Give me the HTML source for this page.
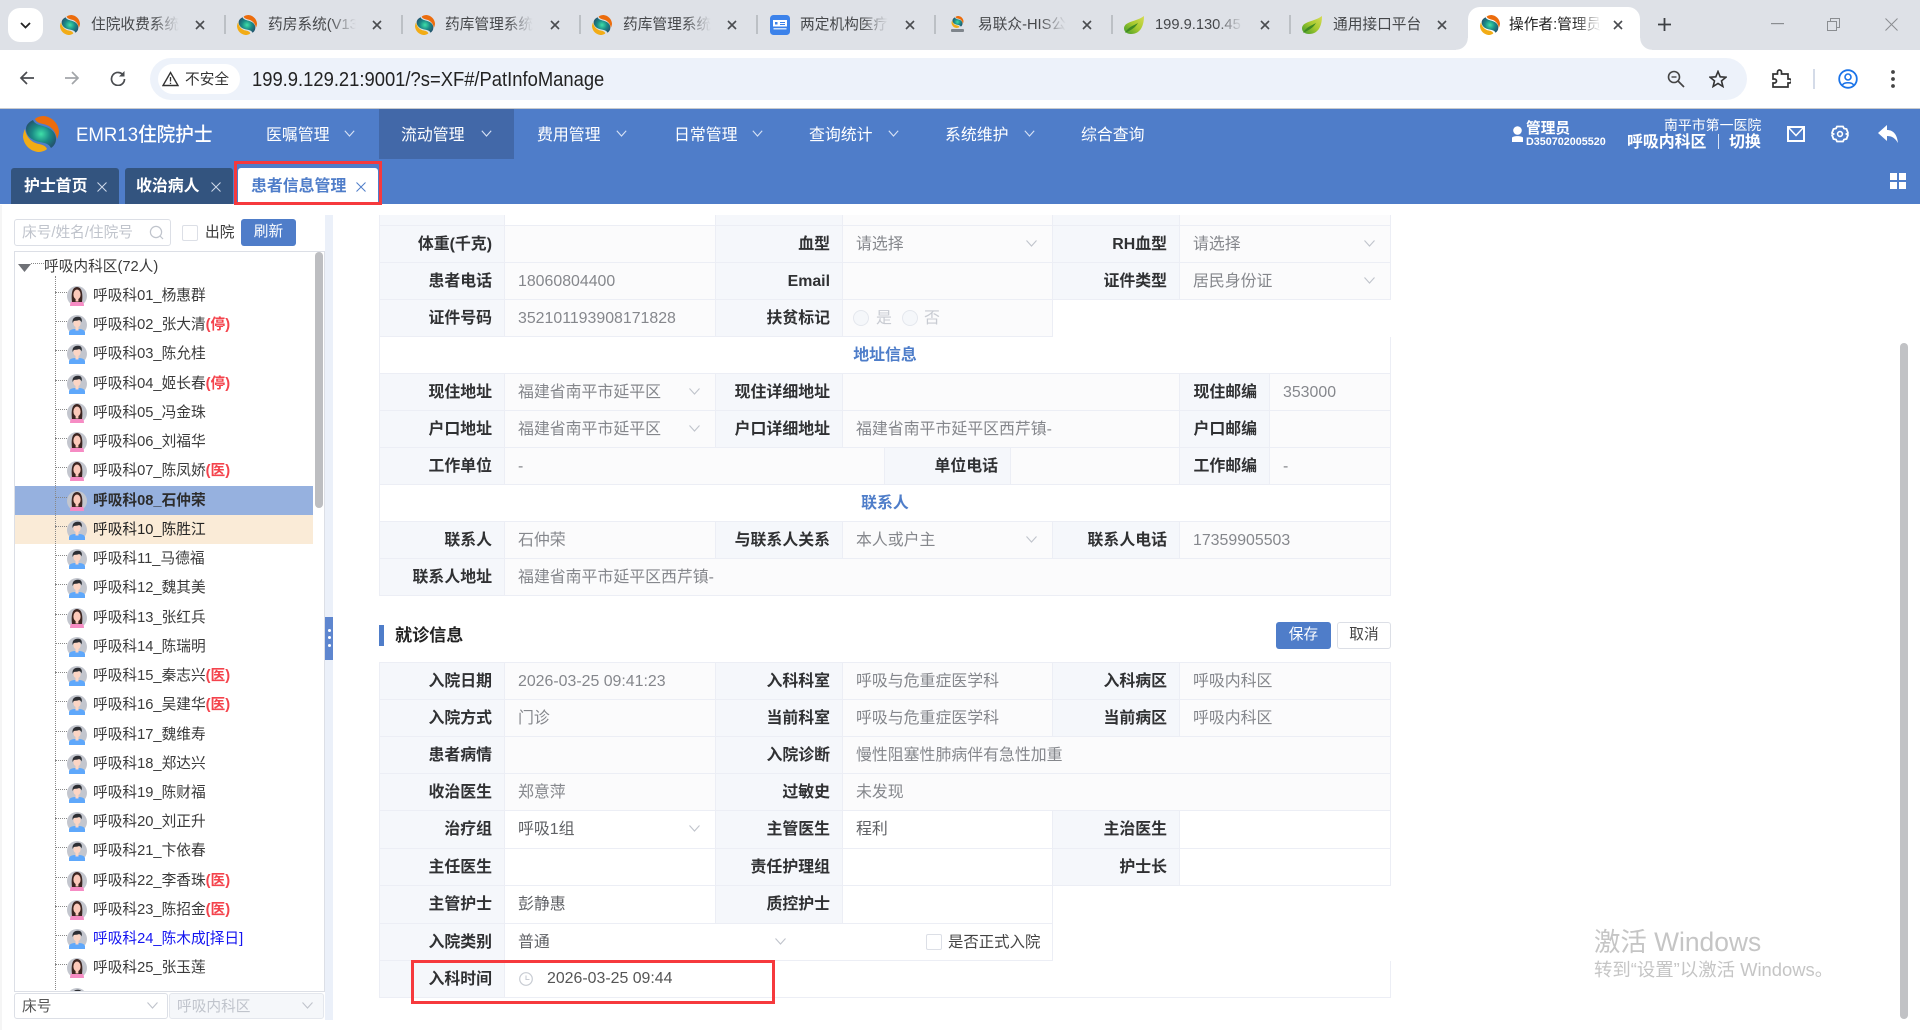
<!DOCTYPE html>
<html lang="zh-CN">
<head>
<meta charset="utf-8">
<title>操作者:管理员</title>
<style>
html,body{margin:0;padding:0;width:1920px;height:1030px;overflow:hidden;background:#fff}
body{position:relative;font-family:"Liberation Sans","Noto Sans CJK SC",sans-serif;color:#333}
div,span{box-sizing:border-box}
.a{position:absolute;white-space:nowrap}
svg{display:block}
/* chrome */
#strip{position:absolute;left:0;top:0;width:1920px;height:50px;background:#dee1e7}
#toolbar{position:absolute;left:0;top:50px;width:1920px;height:59px;background:#fff;border-bottom:1px solid #c8cacd;border-radius:8px 8px 0 0}
.tt{position:absolute;top:13px;height:24px;line-height:24px;font-size:14.7px;color:#45474a;width:88px;overflow:hidden;white-space:nowrap;-webkit-mask-image:linear-gradient(90deg,#000 70%,transparent 100%);mask-image:linear-gradient(90deg,#000 70%,transparent 100%)}
.ti{position:absolute;top:15px;width:20px;height:20px}
.tx{position:absolute;top:20px;width:10px;height:10px}
.sep{position:absolute;top:15px;width:2px;height:19px;background:#bcc0c5}
/* header */
#hdr{position:absolute;left:0;top:109px;width:1920px;height:95px;background:#4f7dc9}
.m{position:absolute;top:15px;line-height:24px;font-size:15.9px;color:#fff;white-space:nowrap}
.mc{position:absolute;top:21px;width:11px;height:7px}
.st{position:absolute;top:59px;height:36px;background:#33547f;border-radius:3px 3px 0 0}
.stt{position:absolute;top:0;line-height:38px;font-size:15.9px;font-weight:700;color:#fff;white-space:nowrap}
/* sidebar */
#tree{position:absolute;left:14px;top:251px;width:311px;height:741px;border:1px solid #dcdfe6;overflow:hidden;background:#fff}
#rows{position:absolute;left:0;top:29px;width:298px}
.r{position:relative;height:29.24px;font-size:14.7px;line-height:31px;color:#3a3a3a;white-space:nowrap}
.r:before{content:"";position:absolute;left:40px;top:11px;width:12px;border-top:1px dotted #888}
.r svg{position:absolute;left:52px;top:5px;width:20px;height:20px}
.r span{position:absolute;left:78px;top:0}
.r b{color:#f4434c;font-weight:700}
.sel{background:#96b1df}.sel span{font-weight:700;color:#2c2c2c}
.cur{background:#faebd7}.cur span{color:#222}
/* form */
.row{position:absolute;left:379px;width:1012px}
.c{position:absolute;top:0;height:100%;border-right:1px solid #eceef5;border-bottom:1px solid #eceef5;font-size:15.9px;line-height:38px;white-space:nowrap}
.l{background:#f5f7fb;text-align:right;padding-right:12px;font-weight:700;color:#303133}
.v{background:#fbfbfc;padding-left:13px;color:#85878c}
.w{background:#fff;color:#606266}
.l1{left:0;width:126px;border-left:1px solid #eceef5}
.v1{left:126px;width:211px}
.l2{left:337px;width:127px}
.v2{left:464px;width:210px}
.l3{left:674px;width:127px}
.v3{left:801px;width:211px}
.ch{position:absolute;right:15px;top:14px;width:11px;height:7px}
.sec{left:0;width:1012px;background:#fff;border-left:1px solid #eceef5;text-align:center;font-weight:700;color:#4e7dc9;font-size:15.9px}
.rad{position:absolute;top:10px;width:16px;height:16px;border:1px solid #e4e7ed;border-radius:50%;background:#f5f7fa}
</style>
</head>
<body>
<svg width="0" height="0" style="position:absolute">
<defs>
<radialGradient id="lg" cx="50%" cy="50%" r="55%"><stop offset="0" stop-color="#3fe0a8"/><stop offset=".55" stop-color="#1b8a86"/><stop offset="1" stop-color="#23566f"/></radialGradient>
<linearGradient id="lf" x1="0" y1="1" x2="1" y2="0"><stop offset="0" stop-color="#3f9a2a"/><stop offset=".5" stop-color="#a6c92e"/><stop offset="1" stop-color="#d8dc55"/></linearGradient>
<symbol id="logo" viewBox="0 0 36 36">
<path d="M21 0C29 1 35 7 36 15C36 18 35 21 34 23C33 15 27 9 20 8C16 7 13 6 12 3C14 1 18 0 21 0Z" fill="#ec6c0c"/>
<path d="M15 36C7 35 1 29 0 21C0 18 1 15 2 13C3 21 9 27 16 28C20 29 23 30 24 33C22 35 18 36 15 36Z" fill="#f2ac16"/>
<path d="M10 4C12 9 18 9 23 11C29 13 33 17 33 23C33 27 31 30 28 32C25 26 18 27 13 25C7 23 3 19 3 13C3 9 6 6 10 4Z" fill="url(#lg)"/>
</symbol>
<symbol id="leaf" viewBox="0 0 20 20"><path d="M20 1C20 10 17 19 7 19C3 19 0 17 0 13C1 6 12 7 20 1Z" fill="url(#lf)"/><path d="M1 18C4 12 9 11 14 8C11 13 7 15 1 18Z" fill="#3f8a22"/></symbol>
<symbol id="x" viewBox="0 0 10 10"><path d="M1 1L9 9M9 1L1 9" stroke="#4a4c50" stroke-width="1.6" fill="none"/></symbol>
<symbol id="d" viewBox="0 0 11 7"><path d="M.5.5L5.5 6L10.5.5" stroke="#c0c4cc" stroke-width="1.1" fill="none"/></symbol>
<symbol id="dw" viewBox="0 0 11 7"><path d="M.8.8L5.5 6L10.2.8" stroke="#d7e2f5" stroke-width="1.1" fill="none"/></symbol>
<symbol id="f" viewBox="0 0 20 20">
<circle cx="10" cy="10" r="10" fill="#c3c6ce"/>
<path d="M3 20C3 15 6 14 10 14C14 14 17 15 17 20Z" fill="#f68cc4"/>
<path d="M5 16C4 8 5 1 10 1C15 1 16 8 15 16L12 16H8Z" fill="#3d2622"/>
<ellipse cx="10" cy="8.5" rx="3.6" ry="5" fill="#fcc9ba"/><rect x="8.6" y="12" width="2.8" height="3.5" fill="#fcc9ba"/></symbol>
<symbol id="m" viewBox="0 0 20 20">
<circle cx="10" cy="10" r="10" fill="#c3c6ce"/>
<path d="M2 20V17C3 14 7 14 10 14C13 14 17 14 18 17V20Z" fill="#5fa8fb"/>
<rect x="8.5" y="11" width="3" height="4.5" fill="#fcd5c4"/>
<ellipse cx="10" cy="8.2" rx="3.6" ry="4.2" fill="#fcd5c4"/>
<path d="M5.6 8C4.8 3.5 8 1.500 11 1.800C14 1.500 15.500 4 14.600 7.500C14 5.800 13 5 11.500 5.200C9.500 6 7 5.500 6.600 6.200Z" fill="#2d2f34"/></symbol>
</defs>
</svg>

<!-- Browser tab strip -->
<div id="strip">
<div class="a" style="left:8px;top:8px;width:35px;height:34px;background:#fff;border-radius:12px"></div>
<svg class="a" style="left:20px;top:22px" width="11" height="7"><path d="M1 1L5.500 5.500L10 1" stroke="#222" stroke-width="1.8" fill="none"/></svg>
<svg class="ti" style="left:60px"><use href="#logo"/></svg><div class="tt" style="left:91px">住院收费系统</div><svg class="tx" style="left:195px"><use href="#x"/></svg>
<div class="sep" style="left:224px"></div>
<svg class="ti" style="left:237px"><use href="#logo"/></svg><div class="tt" style="left:268px">药房系统(V13</div><svg class="tx" style="left:372px"><use href="#x"/></svg>
<div class="sep" style="left:401px"></div>
<svg class="ti" style="left:415px"><use href="#logo"/></svg><div class="tt" style="left:445px">药库管理系统</div><svg class="tx" style="left:550px"><use href="#x"/></svg>
<div class="sep" style="left:579px"></div>
<svg class="ti" style="left:592px"><use href="#logo"/></svg><div class="tt" style="left:623px">药库管理系统</div><svg class="tx" style="left:727px"><use href="#x"/></svg>
<div class="sep" style="left:756px"></div>
<svg class="ti" style="left:770px" viewBox="0 0 20 20"><rect width="20" height="20" rx="3.500" fill="#3c82ea"/><rect x="3" y="5" width="14" height="6.500" fill="#fff"/><rect x="5" y="7" width="2.500" height="2.500" fill="#3c82ea"/><rect x="10" y="7" width="5" height="1" fill="#3c82ea"/><rect x="10" y="9" width="5" height="1" fill="#3c82ea"/><rect x="3.500" y="13" width="13" height="1.500" fill="#cfe2fb"/></svg><div class="tt" style="left:800px">两定机构医疗</div><svg class="tx" style="left:905px"><use href="#x"/></svg>
<div class="sep" style="left:934px"></div>
<svg class="ti" style="left:951px;top:16px;width:13px;height:17px" viewBox="0 0 13 17"><use href="#logo" width="13" height="12"/><rect x="0" y="13" width="13" height="3" rx="1" fill="#7f858c"/></svg><div class="tt" style="left:978px">易联众-HIS公</div><svg class="tx" style="left:1082px"><use href="#x"/></svg>
<div class="sep" style="left:1111px"></div>
<svg class="ti" style="left:1124px"><use href="#leaf"/></svg><div class="tt" style="left:1155px">199.9.130.45</div><svg class="tx" style="left:1260px"><use href="#x"/></svg>
<div class="sep" style="left:1289px"></div>
<svg class="ti" style="left:1302px"><use href="#leaf"/></svg><div class="tt" style="left:1333px;-webkit-mask-image:none;mask-image:none">通用接口平台</div><svg class="tx" style="left:1437px"><use href="#x"/></svg>
<!-- active tab -->
<div class="a" style="left:1468px;top:7px;width:172px;height:43px;background:#fff;border-radius:12px 12px 0 0"></div>
<div class="a" style="left:1456px;top:38px;width:12px;height:12px;background:radial-gradient(circle at 0 0,#dee1e7 11.5px,#fff 12px)"></div>
<div class="a" style="left:1640px;top:38px;width:12px;height:12px;background:radial-gradient(circle at 100% 0,#dee1e7 11.5px,#fff 12px)"></div>
<svg class="ti" style="left:1480px"><use href="#logo"/></svg><div class="tt" style="left:1509px;color:#222;width:92px">操作者:管理员</div><svg class="tx" style="left:1613px"><use href="#x"/></svg>
<svg class="a" style="left:1657px;top:17px" width="15" height="15"><path d="M7.500 1V14M1 7.500H14" stroke="#3c3f43" stroke-width="1.8"/></svg>
<svg class="a" style="left:1771px;top:23px" width="13" height="2"><rect width="13" height="1.2" fill="#8a8d91"/></svg>
<svg class="a" style="left:1827px;top:18px" width="13" height="13"><path d="M.5 3.500H9.500V12.500H.5ZM3.500 3.500V.5H12.500V9.500H9.500" stroke="#8a8d91" fill="none"/></svg>
<svg class="a" style="left:1885px;top:18px" width="13" height="13"><path d="M.5.5L12.500 12.500M12.500.5L.5 12.500" stroke="#8a8d91" fill="none"/></svg>
</div>

<!-- Toolbar -->
<div id="toolbar"></div>
<svg class="a" style="left:19px;top:70px" width="16" height="16"><path d="M15 8H2M8 2L2 8L8 14" stroke="#4a4c50" stroke-width="1.7" fill="none"/></svg>
<svg class="a" style="left:64px;top:70px" width="16" height="16"><path d="M1 8H14M8 2L14 8L8 14" stroke="#a2a5a9" stroke-width="1.7" fill="none"/></svg>
<svg class="a" style="left:110px;top:70px" width="16" height="16"><path d="M13.500 5.500A6.500 6.500 0 1 0 14.500 9" stroke="#4a4c50" stroke-width="1.7" fill="none"/><path d="M14.500 1V6.500H9" fill="#4a4c50"/></svg>
<div class="a" style="left:150px;top:58px;width:1597px;height:42px;background:#edf2fa;border-radius:21px"></div>
<div class="a" style="left:158px;top:64px;width:82px;height:30px;background:#fff;border-radius:15px"></div>
<svg class="a" style="left:162px;top:71px" width="17" height="16"><path d="M8.500 1.500L16 14.500H1Z" stroke="#333" stroke-width="1.4" fill="none"/><path d="M8.500 6V10.500M8.500 11.700V13" stroke="#333" stroke-width="1.3"/></svg>
<div class="a" style="left:185px;top:68px;line-height:24px;font-size:14.7px;color:#333">不安全</div>
<div class="a" style="left:252px;top:66px;line-height:28px;font-size:20.4px;color:#222;transform-origin:0 50%;transform:scaleX(.902)">199.9.129.21:9001/?s=XF#/PatInfoManage</div>
<svg class="a" style="left:1667px;top:70px" width="18" height="18"><circle cx="7" cy="7" r="5.500" stroke="#444" stroke-width="1.6" fill="none"/><path d="M11 11L17 17" stroke="#444" stroke-width="1.7"/><path d="M4.500 7H9.500" stroke="#444" stroke-width="1.4"/></svg>
<svg class="a" style="left:1709px;top:70px" width="18" height="18"><path d="M9 1.500L11.200 6.800L16.900 7.200L12.500 10.900L13.900 16.500L9 13.500L4.100 16.500L5.500 10.900L1.100 7.200L6.800 6.800Z" stroke="#333" stroke-width="1.6" fill="none"/></svg>
<svg class="a" style="left:1771px;top:68px" width="20" height="20"><path d="M2 6H6.500V4A2 2 0 0 1 10.500 4V6H17V11H18.500A2 2 0 0 1 18.500 15H17V19H2V15H3.500A1.800 1.800 0 0 0 3.500 11H2Z" stroke="#333" stroke-width="1.7" fill="none"/></svg>
<div class="a" style="left:1813px;top:69px;width:2px;height:20px;background:#d4dbe8"></div>
<svg class="a" style="left:1838px;top:69px" width="20" height="20"><circle cx="10" cy="10" r="8.800" stroke="#1a73e8" stroke-width="1.8" fill="none"/><circle cx="10" cy="8" r="3" stroke="#1a73e8" stroke-width="1.6" fill="none"/><path d="M4.500 16C6 13 14 13 15.500 16" stroke="#1a73e8" stroke-width="1.6" fill="none"/></svg>
<svg class="a" style="left:1890px;top:69px" width="6" height="20"><circle cx="3" cy="3" r="1.9" fill="#444"/><circle cx="3" cy="10" r="1.9" fill="#444"/><circle cx="3" cy="17" r="1.9" fill="#444"/></svg>

<!-- App header -->
<div id="hdr">
<svg class="a" style="left:23px;top:7px" width="36" height="36"><use href="#logo"/></svg>
<div class="a" style="left:76px;top:13px;line-height:26px;font-size:19.4px;font-weight:500;color:#fff;transform-origin:0 50%;transform:scaleX(.96)">EMR13住院护士</div>
<div class="a" style="left:379px;top:0;width:135px;height:50px;background:#4268a8"></div>
<div class="m" style="left:266px">医嘱管理</div><svg class="mc" style="left:344px"><use href="#dw"/></svg>
<div class="m" style="left:401px">流动管理</div><svg class="mc" style="left:481px"><use href="#dw"/></svg>
<div class="m" style="left:537px">费用管理</div><svg class="mc" style="left:616px"><use href="#dw"/></svg>
<div class="m" style="left:674px">日常管理</div><svg class="mc" style="left:752px"><use href="#dw"/></svg>
<div class="m" style="left:809px">查询统计</div><svg class="mc" style="left:888px"><use href="#dw"/></svg>
<div class="m" style="left:945px">系统维护</div><svg class="mc" style="left:1024px"><use href="#dw"/></svg>
<div class="m" style="left:1081px">综合查询</div>

<svg class="a" style="left:1511px;top:17px" width="13" height="17"><circle cx="6.500" cy="4.500" r="4.300" fill="#fff"/><path d="M1 12C1 9.500 12 9.500 12 12V16H1Z" fill="#fff"/></svg>
<div class="a" style="left:1526px;top:12px;line-height:17px;font-size:14.7px;font-weight:700;color:#fff">管理员</div>
<div class="a" style="left:1526px;top:27px;line-height:13px;font-size:11px;font-weight:700;color:#fff;transform-origin:0 50%;transform:scaleX(.98)">D350702005520</div>
<div class="a" style="left:1664px;top:8px;line-height:17px;font-size:13.9px;color:#fff">南平市第一医院</div>
<div class="a" style="left:1627px;top:24px;line-height:20px;font-size:15.9px;font-weight:700;color:#fff">呼吸内科区</div>
<div class="a" style="left:1718px;top:25px;width:1px;height:15px;background:#dbe5f6"></div>
<div class="a" style="left:1729px;top:24px;line-height:20px;font-size:15.9px;font-weight:700;color:#fff">切换</div>
<svg class="a" style="left:1787px;top:17px" width="18" height="16"><rect x="1" y="1" width="16" height="14" stroke="#fff" stroke-width="2" fill="none"/><path d="M1.500 1.500L9 9.500L16.500 1.500" stroke="#fff" stroke-width="1.5" fill="none"/></svg>
<svg class="a" style="left:1831px;top:16px" width="18" height="18"><path d="M6 1.500H12L13 3.500L15.500 4L17 8L15.500 9L17 10L15.500 14L13 14.500L12 16.500H6L5 14.500L2.500 14L1 10L2.500 9L1 8L2.500 4L5 3.500Z" stroke="#fff" stroke-width="1.8" fill="none"/><circle cx="9" cy="9" r="2.400" stroke="#fff" stroke-width="1.6" fill="none"/></svg>
<svg class="a" style="left:1878px;top:16px" width="20" height="18"><path d="M9 0V5C15 5 19 9 20 18C17 13 14 11 9 11V16L0 8Z" fill="#fff"/></svg>
<svg class="a" style="left:1890px;top:64px" width="16" height="16"><rect width="7" height="7" fill="#fff"/><rect x="9" width="7" height="7" fill="#fff"/><rect y="9" width="7" height="7" fill="#fff"/><rect x="9" y="9" width="7" height="7" fill="#fff"/></svg>

<div class="st" style="left:11px;width:108px"><div class="stt" style="left:13px">护士首页</div><svg class="a" style="left:86px;top:14px" width="10" height="10"><path d="M.5.5L9.500 9.500M9.500.5L.5 9.500" stroke="#cfd9ea" stroke-width="1"/></svg></div>
<div class="st" style="left:125px;width:108px"><div class="stt" style="left:11px">收治病人</div><svg class="a" style="left:86px;top:14px" width="10" height="10"><path d="M.5.5L9.500 9.500M9.500.5L.5 9.500" stroke="#cfd9ea" stroke-width="1"/></svg></div>
<div class="st" style="left:238px;width:140px;background:#fff"><div class="stt" style="left:13px;color:#4f7dc9">患者信息管理</div><svg class="a" style="left:118px;top:14px" width="10" height="10"><path d="M.5.5L9.500 9.500M9.500.5L.5 9.500" stroke="#4f7dc9" stroke-width="1"/></svg></div>
</div>
<div class="a" style="left:234px;top:161px;width:148px;height:44px;border:3px solid #f6393d"></div>

<!-- Sidebar -->
<div class="a" style="left:0;top:205px;width:2px;height:825px;background:#f5f5f5"></div>
<div class="a" style="left:14px;top:219px;width:157px;height:27px;border:1px solid #dcdfe6;border-radius:3px;background:#fff;padding-left:7px;font-size:14.7px;line-height:27px;color:#c0c4cc">床号/姓名/住院号</div>
<svg class="a" style="left:149px;top:225px" width="15" height="15"><circle cx="7" cy="7" r="5.600" stroke="#c0c4cc" stroke-width="1.2" fill="none"/><path d="M11 11L14 14" stroke="#c0c4cc" stroke-width="1.2"/></svg>
<div class="a" style="left:182px;top:225px;width:16px;height:16px;border:1px solid #dcdfe6;border-radius:2px"></div>
<div class="a" style="left:205px;top:220px;line-height:27px;font-size:14.7px;color:#3a3a3a">出院</div>
<div class="a" style="left:241px;top:219px;width:55px;height:27px;background:#4f7dc9;border-radius:3px;color:#fff;font-size:14.7px;line-height:26px;text-align:center">刷新</div>

<div id="tree">
<svg class="a" style="left:3px;top:12px" width="13" height="8"><path d="M0 0H13L6.500 8Z" fill="#6f7176"/></svg>
<div class="a" style="left:16px;top:11px;width:13px;border-top:1px dotted #888"></div>
<div class="a" style="left:29px;top:0;line-height:31px;font-size:14.7px;color:#3a3a3a">呼吸内科区(72人)</div>
<div class="a" style="left:40px;top:24px;height:720px;border-left:1px dotted #888;z-index:2"></div>
<div id="rows">
<div class="r"><svg><use href="#f"/></svg><span>呼吸科01_杨惠群</span></div>
<div class="r"><svg><use href="#m"/></svg><span>呼吸科02_张大清<b>(停)</b></span></div>
<div class="r"><svg><use href="#m"/></svg><span>呼吸科03_陈允桂</span></div>
<div class="r"><svg><use href="#m"/></svg><span>呼吸科04_姬长春<b>(停)</b></span></div>
<div class="r"><svg><use href="#f"/></svg><span>呼吸科05_冯金珠</span></div>
<div class="r"><svg><use href="#f"/></svg><span>呼吸科06_刘福华</span></div>
<div class="r"><svg><use href="#f"/></svg><span>呼吸科07_陈凤娇<b>(医)</b></span></div>
<div class="r sel"><svg><use href="#f"/></svg><span>呼吸科08_石仲荣</span></div>
<div class="r cur"><svg><use href="#m"/></svg><span>呼吸科10_陈胜江</span></div>
<div class="r"><svg><use href="#m"/></svg><span>呼吸科11_马德福</span></div>
<div class="r"><svg><use href="#m"/></svg><span>呼吸科12_魏其美</span></div>
<div class="r"><svg><use href="#f"/></svg><span>呼吸科13_张红兵</span></div>
<div class="r"><svg><use href="#m"/></svg><span>呼吸科14_陈瑞明</span></div>
<div class="r"><svg><use href="#m"/></svg><span>呼吸科15_秦志兴<b>(医)</b></span></div>
<div class="r"><svg><use href="#m"/></svg><span>呼吸科16_吴建华<b>(医)</b></span></div>
<div class="r"><svg><use href="#m"/></svg><span>呼吸科17_魏维寿</span></div>
<div class="r"><svg><use href="#m"/></svg><span>呼吸科18_郑达兴</span></div>
<div class="r"><svg><use href="#m"/></svg><span>呼吸科19_陈财福</span></div>
<div class="r"><svg><use href="#m"/></svg><span>呼吸科20_刘正升</span></div>
<div class="r"><svg><use href="#m"/></svg><span>呼吸科21_卞依春</span></div>
<div class="r"><svg><use href="#f"/></svg><span>呼吸科22_李香珠<b>(医)</b></span></div>
<div class="r"><svg><use href="#f"/></svg><span>呼吸科23_陈招金<b>(医)</b></span></div>
<div class="r"><svg><use href="#m"/></svg><span style="color:#1414f0">呼吸科24_陈木成[择日]</span></div>
<div class="r"><svg><use href="#f"/></svg><span>呼吸科25_张玉莲</span></div>
<div class="r"><svg><use href="#m"/></svg></div>
</div>
<div class="a" style="left:300px;top:0;width:8px;height:256px;background:#bdbec1;border-radius:4px"></div>
</div>
<div class="a" style="left:14px;top:993px;width:154px;height:26px;border:1px solid #dcdfe6;border-radius:3px;padding-left:7px;font-size:14.7px;line-height:27px;color:#555">床号</div>
<svg class="a" style="left:147px;top:1002px" width="11" height="7"><use href="#d"/></svg>
<div class="a" style="left:169px;top:993px;width:155px;height:26px;border:1px solid #e4e7ed;border-radius:3px;background:#f5f7fa;padding-left:7px;font-size:14.7px;line-height:27px;color:#c0c4cc">呼吸内科区</div>
<svg class="a" style="left:302px;top:1002px" width="11" height="7"><use href="#d"/></svg>
<div class="a" style="left:325px;top:215px;width:8px;height:805px;background:#ebf0f9"></div>
<div class="a" style="left:325px;top:617px;width:8px;height:43px;background:#5e86cf"></div>
<div class="a" style="left:328px;top:629px;width:3px;height:3px;background:#fff;border-radius:50%"></div>
<div class="a" style="left:328px;top:636px;width:3px;height:3px;background:#fff;border-radius:50%"></div>
<div class="a" style="left:328px;top:644px;width:3px;height:3px;background:#fff;border-radius:50%"></div>

<!-- Upper form -->
<div class="row" style="top:215px;height:11px">
<div class="c l l1"></div><div class="c v v1" style="background:#fff"></div><div class="c l l2"></div><div class="c v v2"></div><div class="c l l3"></div><div class="c v v3"></div>
</div>
<div class="row" style="top:226px;height:37px">
<div class="c l l1">体重(千克)</div><div class="c v v1"></div>
<div class="c l l2">血型</div><div class="c v v2">请选择<svg class="ch"><use href="#d"/></svg></div>
<div class="c l l3">RH血型</div><div class="c v v3">请选择<svg class="ch"><use href="#d"/></svg></div>
</div>
<div class="row" style="top:263px;height:37px">
<div class="c l l1">患者电话</div><div class="c v v1">18060804400</div>
<div class="c l l2">Email</div><div class="c v v2"></div>
<div class="c l l3">证件类型</div><div class="c v v3">居民身份证<svg class="ch"><use href="#d"/></svg></div>
</div>
<div class="row" style="top:300px;height:37px">
<div class="c l l1">证件号码</div><div class="c v v1">352101193908171828</div>
<div class="c l l2">扶贫标记</div><div class="c v v2" style="color:#c8cbd2">
<span class="rad" style="left:10px"></span><span style="position:absolute;left:33px;top:0">是</span>
<span class="rad" style="left:59px"></span><span style="position:absolute;left:81px;top:0">否</span></div>
</div>
<div class="row" style="top:337px;height:37px"><div class="c sec">地址信息</div></div>
<div class="row" style="top:374px;height:37px">
<div class="c l l1">现住地址</div><div class="c v v1">福建省南平市延平区<svg class="ch"><use href="#d"/></svg></div>
<div class="c l l2">现住详细地址</div><div class="c v" style="left:464px;width:337px"></div>
<div class="c l" style="left:801px;width:90px">现住邮编</div><div class="c v" style="left:891px;width:121px">353000</div>
</div>
<div class="row" style="top:411px;height:37px">
<div class="c l l1">户口地址</div><div class="c v v1">福建省南平市延平区<svg class="ch"><use href="#d"/></svg></div>
<div class="c l l2">户口详细地址</div><div class="c v" style="left:464px;width:337px">福建省南平市延平区西芹镇-</div>
<div class="c l" style="left:801px;width:90px">户口邮编</div><div class="c v" style="left:891px;width:121px"></div>
</div>
<div class="row" style="top:448px;height:37px">
<div class="c l l1">工作单位</div><div class="c v" style="left:126px;width:380px">-</div>
<div class="c l" style="left:506px;width:126px">单位电话</div><div class="c v" style="left:632px;width:169px"></div>
<div class="c l" style="left:801px;width:90px">工作邮编</div><div class="c v" style="left:891px;width:121px">-</div>
</div>
<div class="row" style="top:485px;height:37px"><div class="c sec">联系人</div></div>
<div class="row" style="top:522px;height:37px">
<div class="c l l1">联系人</div><div class="c v v1">石仲荣</div>
<div class="c l l2">与联系人关系</div><div class="c v v2">本人或户主<svg class="ch"><use href="#d"/></svg></div>
<div class="c l l3">联系人电话</div><div class="c v v3">17359905503</div>
</div>
<div class="row" style="top:559px;height:37px">
<div class="c l l1">联系人地址</div><div class="c v" style="left:126px;width:886px">福建省南平市延平区西芹镇-</div>
</div>

<!-- Visit section -->
<div class="a" style="left:379px;top:625px;width:5px;height:21px;background:#4f7dc9"></div>
<div class="a" style="left:395px;top:622px;line-height:27px;font-size:17.1px;font-weight:700;color:#222">就诊信息</div>
<div class="a" style="left:1276px;top:622px;width:55px;height:27px;background:#4f7dc9;border-radius:3px;color:#fff;font-size:14.7px;line-height:26px;text-align:center">保存</div>
<div class="a" style="left:1337px;top:622px;width:54px;height:27px;border:1px solid #dcdfe6;border-radius:3px;background:#fff;color:#444;font-size:14.7px;line-height:24px;text-align:center">取消</div>

<div class="a" style="left:379px;top:662px;width:1012px;height:1px;background:#eceef5"></div>
<div class="row" style="top:663px;height:37px">
<div class="c l l1">入院日期</div><div class="c v v1">2026-03-25 09:41:23</div>
<div class="c l l2">入科科室</div><div class="c v v2">呼吸与危重症医学科</div>
<div class="c l l3">入科病区</div><div class="c v v3">呼吸内科区</div>
</div>
<div class="row" style="top:700px;height:37px">
<div class="c l l1">入院方式</div><div class="c v v1">门诊</div>
<div class="c l l2">当前科室</div><div class="c v v2">呼吸与危重症医学科</div>
<div class="c l l3">当前病区</div><div class="c v v3">呼吸内科区</div>
</div>
<div class="row" style="top:737px;height:37px">
<div class="c l l1">患者病情</div><div class="c v v1"></div>
<div class="c l l2">入院诊断</div><div class="c v" style="left:464px;width:548px">慢性阻塞性肺病伴有急性加重</div>
</div>
<div class="row" style="top:774px;height:37px">
<div class="c l l1">收治医生</div><div class="c v v1">郑意萍</div>
<div class="c l l2">过敏史</div><div class="c v" style="left:464px;width:548px">未发现</div>
</div>
<div class="row" style="top:811px;height:38px">
<div class="c l l1">治疗组</div><div class="c v w v1">呼吸1组<svg class="ch"><use href="#d"/></svg></div>
<div class="c l l2">主管医生</div><div class="c v w v2">程利</div>
<div class="c l l3">主治医生</div><div class="c v w v3"></div>
</div>
<div class="row" style="top:849px;height:37px">
<div class="c l l1">主任医生</div><div class="c v w v1"></div>
<div class="c l l2">责任护理组</div><div class="c v w v2"></div>
<div class="c l l3">护士长</div><div class="c v w v3"></div>
</div>
<div class="row" style="top:886px;height:38px">
<div class="c l l1">主管护士</div><div class="c v w v1">彭静惠</div>
<div class="c l l2">质控护士</div><div class="c v w v2"></div>
</div>
<div class="row" style="top:924px;height:37px">
<div class="c l l1">入院类别</div><div class="c v w" style="left:126px;width:548px">普通
<svg class="ch" style="right:auto;left:270px"><use href="#d"/></svg>
<span style="position:absolute;left:421px;top:10px;width:16px;height:16px;border:1px solid #dcdfe6;border-radius:2px"></span>
<span style="position:absolute;left:443px;top:0;color:#444;font-size:15.4px">是否正式入院</span></div>
</div>
<div class="row" style="top:961px;height:37px">
<div class="c l l1">入科时间</div><div class="c v w" style="left:126px;width:886px"></div>
</div>
<svg class="a" style="left:519px;top:972px" width="14" height="14"><circle cx="7" cy="7" r="6.300" stroke="#c8ccd3" stroke-width="1.2" fill="none"/><path d="M7 3.500V7.500H10.500" stroke="#c8ccd3" stroke-width="1.1" fill="none"/></svg>
<div class="a" style="left:547px;top:965px;line-height:28px;font-size:15.9px;color:#555">2026-03-25 09:44</div>
<div class="a" style="left:411px;top:960px;width:364px;height:44px;border:3px solid #f6393d"></div>

<!-- Page scrollbar & watermark -->
<div class="a" style="left:1900px;top:343px;width:8px;height:676px;background:#c1c2c5;border-radius:4px"></div>
<div class="a" style="left:1594px;top:925px;line-height:34px;font-size:26.4px;color:#c5c5c5">激活 Windows</div>
<div class="a" style="left:1594px;top:957px;line-height:26px;font-size:18.4px;color:#c5c5c5">转到“设置”以激活 Windows。</div>
</body>
</html>
